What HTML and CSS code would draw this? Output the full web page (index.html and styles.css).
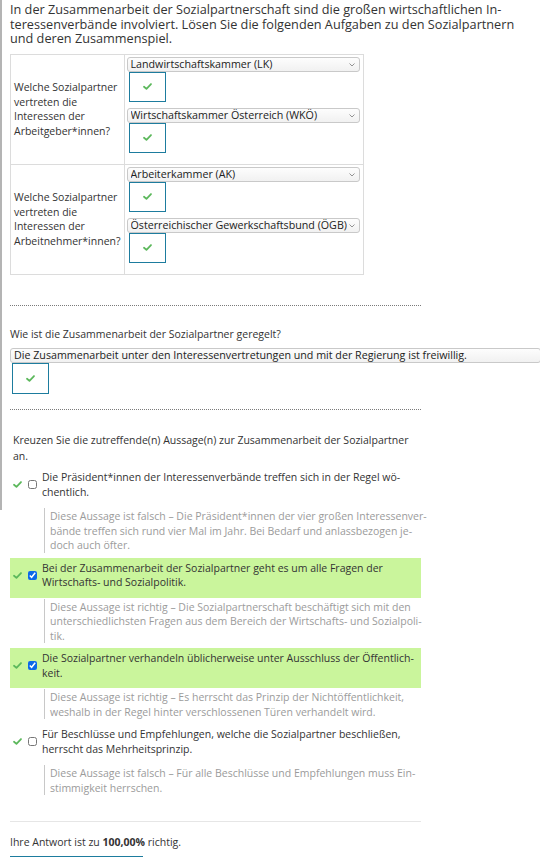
FILE: index.html
```html
<!DOCTYPE html>
<html lang="de">
<head>
<meta charset="utf-8">
<title>Sozialpartnerschaft</title>
<link rel="stylesheet" href="styles.css">
</head>
<body>
<div class="frame-edge"></div>
<main class="page">
  <p class="intro">In der Zusammenarbeit der Sozialpartnerschaft sind die großen wirtschaftlichen In&shy;teressenverbände involviert. Lösen Sie die folgenden Aufgaben zu den Sozialpartnern und deren Zusammenspiel.</p>

  <table class="match">
    <tr>
      <th class="q">Welche Sozialpartner vertreten die Interessen der Arbeitgeber*innen?</th>
      <td class="answers">
        <div class="pick">
          <div class="select"><select><option>Landwirtschaftskammer (LK)</option></select><svg class="chev" viewBox="0 0 6 4"><path d="M0.5 0.5 L3 3 L5.5 0.5"/></svg></div>
          <div class="mark"><svg class="tick" viewBox="0 0 10 8"><path d="M1 4.3 L3.8 6.8 L9 1.2"/></svg></div>
        </div>
        <div class="pick">
          <div class="select"><select><option>Wirtschaftskammer Österreich (WKÖ)</option></select><svg class="chev" viewBox="0 0 6 4"><path d="M0.5 0.5 L3 3 L5.5 0.5"/></svg></div>
          <div class="mark"><svg class="tick" viewBox="0 0 10 8"><path d="M1 4.3 L3.8 6.8 L9 1.2"/></svg></div>
        </div>
      </td>
    </tr>
    <tr>
      <th class="q">Welche Sozialpartner vertreten die Interessen der Arbeitnehmer*innen?</th>
      <td class="answers">
        <div class="pick">
          <div class="select"><select><option>Arbeiterkammer (AK)</option></select><svg class="chev" viewBox="0 0 6 4"><path d="M0.5 0.5 L3 3 L5.5 0.5"/></svg></div>
          <div class="mark"><svg class="tick" viewBox="0 0 10 8"><path d="M1 4.3 L3.8 6.8 L9 1.2"/></svg></div>
        </div>
        <div class="pick">
          <div class="select"><select><option>Österreichischer Gewerkschaftsbund (ÖGB)</option></select><svg class="chev" viewBox="0 0 6 4"><path d="M0.5 0.5 L3 3 L5.5 0.5"/></svg></div>
          <div class="mark"><svg class="tick" viewBox="0 0 10 8"><path d="M1 4.3 L3.8 6.8 L9 1.2"/></svg></div>
        </div>
      </td>
    </tr>
  </table>

  <hr class="dots">

  <section class="single">
    <p class="prompt">Wie ist die Zusammenarbeit der Sozialpartner geregelt?</p>
    <div class="select wide"><select><option>Die Zusammenarbeit unter den Interessenvertretungen und mit der Regierung ist freiwillig.</option></select></div>
    <div class="mark"><svg class="tick" viewBox="0 0 10 8"><path d="M1 4.3 L3.8 6.8 L9 1.2"/></svg></div>
  </section>

  <hr class="dots second">

  <section class="multi">
    <p class="prompt lead">Kreuzen Sie die zutreffende(n) Aussage(n) zur Zusammenarbeit der Sozialpartner an.</p>
    <ul class="options">
      <li class="opt">
        <div class="row">
          <svg class="ok" viewBox="0 0 10 8"><path d="M1 4.3 L3.8 6.8 L9 1.2"/></svg>
          <input type="checkbox" class="box">
          <span class="label">Die Präsident*innen der Interessenverbände treffen sich in der Regel wö&shy;chentlich.</span>
        </div>
        <p class="fb">Diese Aussage ist falsch – Die Präsident*innen der vier großen Interessenver&shy;bände treffen sich rund vier Mal im Jahr. Bei Bedarf und anlassbezogen je&shy;doch auch öfter.</p>
      </li>
      <li class="opt">
        <div class="row hit">
          <svg class="ok" viewBox="0 0 10 8"><path d="M1 4.3 L3.8 6.8 L9 1.2"/></svg>
          <input type="checkbox" class="box" checked>
          <span class="label">Bei der Zusammenarbeit der Sozialpartner geht es um alle Fragen der Wirtschafts- und Sozialpolitik.</span>
        </div>
        <p class="fb">Diese Aussage ist richtig – Die Sozialpartnerschaft beschäftigt sich mit den unterschiedlichsten Fragen aus dem Bereich der Wirtschafts- und Sozialpoli&shy;tik.</p>
      </li>
      <li class="opt">
        <div class="row hit">
          <svg class="ok" viewBox="0 0 10 8"><path d="M1 4.3 L3.8 6.8 L9 1.2"/></svg>
          <input type="checkbox" class="box" checked>
          <span class="label">Die Sozialpartner verhandeln üblicherweise unter Ausschluss der Öffentlich&shy;keit.</span>
        </div>
        <p class="fb">Diese Aussage ist richtig – Es herrscht das Prinzip der Nichtöffentlichkeit, weshalb in der Regel hinter verschlossenen Türen verhandelt wird.</p>
      </li>
      <li class="opt">
        <div class="row">
          <svg class="ok" viewBox="0 0 10 8"><path d="M1 4.3 L3.8 6.8 L9 1.2"/></svg>
          <input type="checkbox" class="box">
          <span class="label">Für Beschlüsse und Empfehlungen, welche die Sozialpartner beschließen, herrscht das Mehrheitsprinzip.</span>
        </div>
        <p class="fb">Diese Aussage ist falsch – Für alle Beschlüsse und Empfehlungen muss Ein&shy;stimmigkeit herrschen.</p>
      </li>
    </ul>
  </section>

  <hr class="rule">

  <p class="result">Ihre Antwort ist zu <b>100,00%</b> richtig.</p>
  <div class="btn-edge" aria-hidden="true"></div>
</main>
</body>
</html>
```

FILE: styles.css
```css
* { box-sizing: border-box; }

html, body {
  margin: 0;
  background: #fff;
}

body {
  font-family: "Open Sans", "Noto Sans", sans-serif;
  color: #333;
  font-size: 10.5px;
  line-height: 14.5px;
  position: relative;
  overflow: hidden;
  height: 857px;
}

.frame-edge {
  position: absolute;
  left: 0;
  top: 0;
  width: 2px;
  height: 510px;
  background: #b4b4b4;
}

.page {
  padding: 2px 0 0 10px;
  width: 540px;
}

.intro {
  margin: 0;
  width: 526px;
  font-size: 12.7px;
  line-height: 14.5px;
}

/* matching table */
.match {
  margin-top: 8px;
  border-collapse: collapse;
  width: 354px;
  border: 1px solid #dcdcdc;
}

.match th,
.match td {
  border: 1px solid #dcdcdc;
  vertical-align: middle;
}

.q {
  width: 113px;
  padding: 3px;
  text-align: left;
  font-weight: normal;
  font-size: 10.5px;
  line-height: 14.5px;
}

.answers {
  padding: 2px 3px 5px 2px;
}

.pick {
  display: flex;
  flex-direction: column;
  align-items: flex-start;
  margin-bottom: 6px;
}

.pick:last-child { margin-bottom: 6px; }

.select {
  position: relative;
  width: 100%;
  height: 15px;
}

.select select {
  appearance: none;
  -webkit-appearance: none;
  width: 100%;
  height: 15px;
  margin: 0;
  padding: 0 12px 0 3px;
  border: 1px solid #c9c9c9;
  border-radius: 3px;
  background: linear-gradient(#fdfdfd, #f1f1f1);
  font-family: inherit;
  font-size: 10.7px;
  line-height: 13px;
  color: #222;
}

.chev {
  position: absolute;
  right: 5px;
  top: 6px;
  width: 6px;
  height: 4px;
  fill: none;
  stroke: #888;
  stroke-width: 0.9;
}

.wide { width: 531px; }

.mark {
  width: 37px;
  height: 30px;
  margin-left: 2px;
  border: 1px solid #1d7c9e;
  display: flex;
  align-items: center;
  justify-content: center;
}

.tick,
.ok {
  width: 9px;
  height: 7px;
  fill: none;
  stroke: #5cb85c;
  stroke-width: 2;
  stroke-linecap: round;
  stroke-linejoin: round;
}

/* separators */
.dots {
  margin: 30px 0 0;
  width: 411px;
  border: 0;
  border-top: 1px dotted #7a7a7a;
  height: 0;
}

.dots.second { margin-top: 15px; }

.single .prompt {
  margin: 21px 0 0;
}

.single .select { margin-top: 7px; }

.single .mark { width: 37px; height: 31px; }

.prompt { font-size: 10.5px; }

.lead {
  margin: 22px 0 0 3px;
  width: 405px;
  line-height: 16px;
}

/* options */
.options {
  list-style: none;
  margin: 3px 0 0;
  padding: 0;
  width: 411px;
}

.opt { margin-bottom: 5px; }

.row {
  display: flex;
  align-items: center;
  padding: 3px 0 8px 3px;
}

.row.hit { background: #caf59c; }

.ok { flex: none; margin-right: 6px; }

.box {
  flex: none;
  width: 9px;
  height: 9px;
  margin: 0 5px 0 0;
  accent-color: #0b68e8;
}

.label {
  flex: 1;
  font-size: 10.5px;
  line-height: 14.5px;
}

.fb {
  margin: 1px -10px 0 34px;
  padding: 1px 0 0 5px;
  border-left: 1px solid #c8c8c8;
  color: #9b9b9b;
  font-size: 10.5px;
  line-height: 14.5px;
}

.rule {
  margin: 26px 0 0;
  width: 411px;
  border: 0;
  border-top: 1px solid #e6e6e6;
  height: 0;
}

.result {
  margin: 13px 0 0;
  font-size: 10.5px;
}

.result b { font-weight: 700; }

.btn-edge {
  margin-top: 6px;
  width: 133px;
  height: 30px;
  border-top: 2px solid #1d7c9e;
}
```
